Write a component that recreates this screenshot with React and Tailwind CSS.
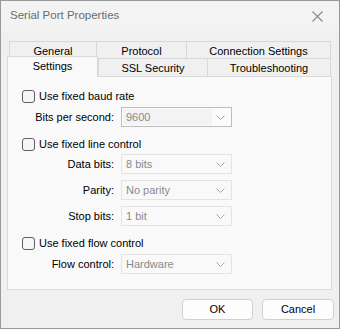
import React from 'react';

const font = { fontFamily: '"Liberation Sans", Arial, sans-serif' };

function Chevron() {
  return (
    <svg width="9" height="5" viewBox="0 0 9 5" className="shrink-0">
      <path d="M0.5 0.5 L4.5 4.5 L8.5 0.5" fill="none" stroke="#a8a8a8" strokeWidth="1" />
    </svg>
  );
}

function Check({ label }) {
  return (
    <div className="flex items-center h-[13px]">
      <div className="w-[13px] h-[13px] rounded-[3px] border border-[#5f5f5f] bg-[#f6f6f6]" />
      <span className="ml-[4px] text-black">{label}</span>
    </div>
  );
}

function Combo({ label, value, editable, className }) {
  return (
    <div className={`flex items-center h-[20px] ${className || ''}`}>
      <span className="w-[93px] text-right pr-px text-black">{label}</span>
      <div
        className={`ml-[6px] w-[111px] h-[20px] border flex items-center ${
          editable ? 'border-[#bdbdbd] bg-[#fbfbfb]' : 'border-[#e3e3e3] bg-[#f9f9f9]'
        }`}
      >
        <div
          className={`h-[16px] ml-px w-[89px] flex items-center pl-[3px] text-[#8a8a8a] ${
            editable ? 'bg-[#f3f3f3]' : ''
          }`}
        >
          {value}
        </div>
        <div className="flex-1 flex justify-center pr-[2px]">
          <Chevron />
        </div>
      </div>
    </div>
  );
}

function Tab({ label, w, selected, last }) {
  if (selected) {
    return (
      <div
        className="relative z-10 h-[21px] -mt-[2px] -mb-px bg-[#f9f9f9] border-x border-t border-[#d9d9d9] flex items-center justify-center pb-[1px] text-black"
        style={{ width: w }}
      >
        {label}
      </div>
    );
  }
  return (
    <div
      className={`h-full bg-[#f0f0f0] border-t border-l border-[#d9d9d9] flex items-center justify-center pt-[2px] text-black ${
        last ? 'border-r' : ''
      }`}
      style={{ width: w }}
    >
      {label}
    </div>
  );
}

export default function App() {
  return (
    <div
      className="w-[340px] h-[329px] border border-[#9a9a9a] bg-[#f0f0f0] flex flex-col text-[11px] leading-none select-none"
      style={font}
    >
      <div className="h-[30px] bg-[#f3f3f3] flex items-center justify-between pl-[9px] pr-[16px] shrink-0">
        <span className="text-[11.5px] text-[#6b6b6b]">Serial Port Properties</span>
        <svg width="11" height="11" viewBox="0 0 11 11">
          <path d="M0.5 0.5 L10.5 10.5 M10.5 0.5 L0.5 10.5" stroke="#8a8a8a" strokeWidth="1.1" />
        </svg>
      </div>

      <div className="pt-[10px] pl-[6px]">
        <div className="flex h-[17px] ml-[2px]">
          <Tab label="General" w={87} />
          <Tab label="Protocol" w={90} />
          <Tab label="Connection Settings" w={145} last />
        </div>
        <div className="flex h-[18px]">
          <Tab label="Settings" w={91} selected />
          <Tab label="SSL Security" w={109} />
          <Tab label="Troubleshooting" w={124} last />
        </div>

        <div className="w-[325px] h-[214px] bg-[#f9f9f9] border border-[#dadada] pl-[14px] pt-[13px]">
          <Check label="Use fixed baud rate" />
          <Combo label="Bits per second:" value="9600" editable className="mt-[4px]" />
          <div className="mt-[11px]">
            <Check label="Use fixed line control" />
          </div>
          <Combo label="Data bits:" value="8 bits" className="mt-[3px]" />
          <Combo label="Parity:" value="No parity" className="mt-[6px]" />
          <Combo label="Stop bits:" value="1 bit" className="mt-[6px]" />
          <div className="mt-[11px]">
            <Check label="Use fixed flow control" />
          </div>
          <Combo label="Flow control:" value="Hardware" className="mt-[4px]" />
        </div>

        <div className="flex justify-end gap-[9px] pr-[5px] mt-[9px]">
          <button className="w-[71px] h-[21px] rounded-[4px] border border-[#d0d0d0] bg-[#fdfdfd] text-black text-[11px]">
            OK
          </button>
          <button className="w-[72px] h-[21px] rounded-[4px] border border-[#d0d0d0] bg-[#fdfdfd] text-black text-[11px]">
            Cancel
          </button>
        </div>
      </div>
    </div>
  );
}
